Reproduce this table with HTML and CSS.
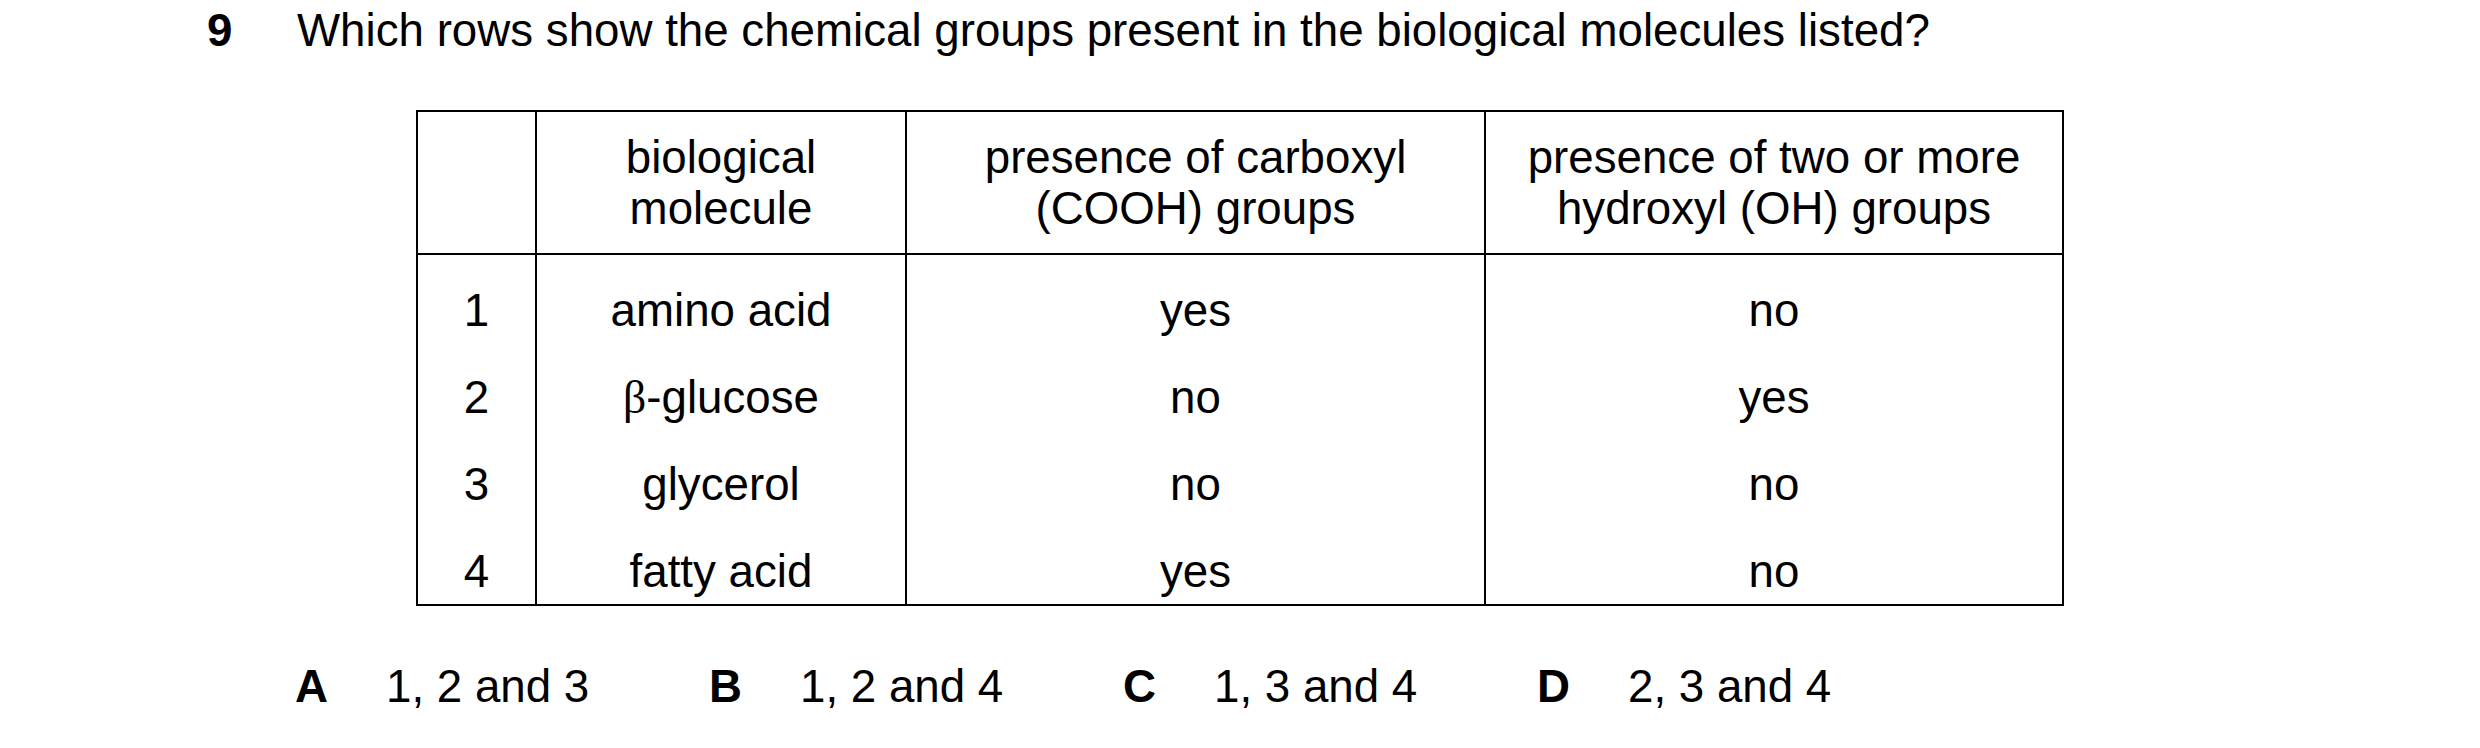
FILE: index.html
```html
<!DOCTYPE html>
<html lang="en">
<head>
<meta charset="utf-8">
<title>Question 9</title>
<link rel="stylesheet" href="styles.css">
</head>
<body>
<div class="page">
  <div class="question">
    <span class="qnum">9</span>
    <span class="qtext">Which rows show the chemical groups present in the biological molecules listed?</span>
  </div>

  <div class="table">
    <div class="cell head"></div>
    <div class="cell head">biological<br>molecule</div>
    <div class="cell head">presence of carboxyl<br>(COOH) groups</div>
    <div class="cell head">presence of two or more<br>hydroxyl (OH) groups</div>

    <div class="cell">1</div>
    <div class="cell">amino acid</div>
    <div class="cell">yes</div>
    <div class="cell">no</div>

    <div class="cell">2</div>
    <div class="cell"><span class="greek">β</span>-glucose</div>
    <div class="cell">no</div>
    <div class="cell">yes</div>

    <div class="cell">3</div>
    <div class="cell">glycerol</div>
    <div class="cell">no</div>
    <div class="cell">no</div>

    <div class="cell last">4</div>
    <div class="cell last">fatty acid</div>
    <div class="cell last">yes</div>
    <div class="cell last">no</div>
  </div>

  <div class="answers">
    <div class="option"><span class="letter">A</span><span>1, 2 and 3</span></div>
    <div class="option"><span class="letter">B</span><span>1, 2 and 4</span></div>
    <div class="option"><span class="letter">C</span><span>1, 3 and 4</span></div>
    <div class="option"><span class="letter">D</span><span>2, 3 and 4</span></div>
  </div>
</div>
</body>
</html>
```

FILE: styles.css
```css
html, body {
  margin: 0;
  padding: 0;
  background: #ffffff;
}

body {
  width: 2480px;
  height: 748px;
  overflow: hidden;
  font-family: "Liberation Sans", Arial, sans-serif;
  font-size: 45.7px;
  line-height: 52px;
  color: #000000;
}

.page {
  padding-top: 5px;
}

.question {
  display: flex;
  padding-left: 207px;
  white-space: nowrap;
}

.qnum {
  width: 90px;
  font-weight: bold;
}

.table {
  display: grid;
  grid-template-columns: 119px 370px 579px 578px;
  grid-template-rows: 143px 87px 87px 87px 90px;
  width: max-content;
  margin-left: 416px;
  margin-top: 53px;
  border-left: 2px solid #000;
  border-top: 2px solid #000;
}

.cell {
  box-sizing: border-box;
  border-right: 2px solid #000;
  text-align: center;
  padding-top: 30px;
  white-space: nowrap;
}

.cell.head {
  display: flex;
  flex-direction: column;
  justify-content: center;
  padding-top: 0;
  line-height: 51px;
  border-bottom: 2px solid #000;
}

.cell.last {
  border-bottom: 2px solid #000;
}

.greek {
  font-family: "Liberation Serif", "Times New Roman", serif;
}

.answers {
  display: flex;
  padding-left: 295px;
  margin-top: 55px;
  white-space: nowrap;
}

.option {
  display: flex;
  width: 414px;
}

.letter {
  width: 91px;
  font-weight: bold;
}
```
